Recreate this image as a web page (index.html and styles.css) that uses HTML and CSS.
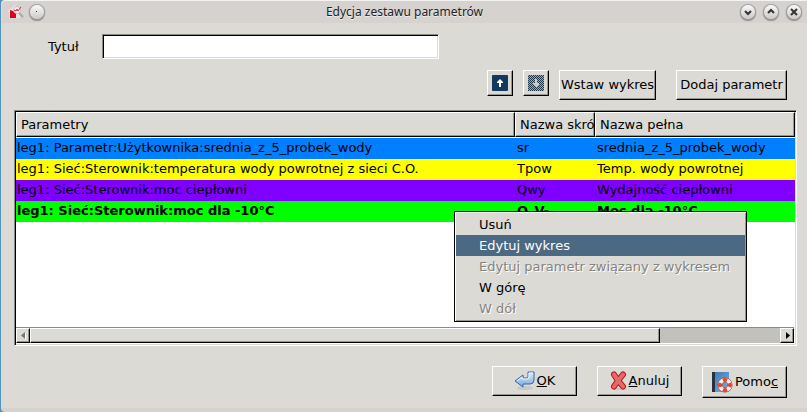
FILE: index.html
```html
<!DOCTYPE html>
<html lang="pl">
<head>
<meta charset="utf-8">
<title>Edycja zestawu parametrów</title>
<link rel="stylesheet" href="styles.css">
</head>
<body>
<div class="window">
  <header class="titlebar">
    <div class="titlebar-side">
      <svg class="app-icon" width="16" height="14" viewBox="0 0 16 14" aria-hidden="true">
        <path d="M0 6L7 0l5 5v8H1V7z" fill="#e9e4e4"/>
        <path d="M2 5l6 2v6H2z" fill="#dc0020"/>
        <circle cx="9" cy="5" r="3.500" fill="#fbeff0" stroke="#d0babc"/>
        <path d="M6 5l2 1 1-2 1 2 3-4" fill="none" stroke="#e0223c"/>
        <path d="M11 8l4 4" stroke="#aaa6a6" stroke-width="2"/>
      </svg>
      <button class="round" type="button" aria-label="Przypnij">
        <svg width="14" height="14" viewBox="0 0 14 14"><rect x="6" y="6" width="1" height="1" stroke="none" fill="#333"/></svg>
      </button>
    </div>
    <h1 class="title">Edycja zestawu parametrów</h1>
    <div class="titlebar-side titlebar-end">
      <button class="round" type="button" aria-label="Minimalizuj">
        <svg width="14" height="14" viewBox="0 0 14 14"><path d="M4 6l3 3 3-3"/></svg>
      </button>
      <button class="round" type="button" aria-label="Maksymalizuj">
        <svg width="14" height="14" viewBox="0 0 14 14"><path d="M4 8l3-3 3 3"/></svg>
      </button>
      <button class="round" type="button" aria-label="Zamknij">
        <svg width="14" height="14" viewBox="0 0 14 14"><path d="M4 4l6 6M10 4l-6 6"/></svg>
      </button>
    </div>
  </header>

  <main class="content">
    <div class="field">
      <label for="name">Tytuł</label>
      <input id="name" type="text">
    </div>

    <div class="toolbar">
      <button class="btn btn-icon" type="button" aria-label="W górę">
        <svg width="16" height="16" viewBox="0 0 16 16"><rect width="16" height="16" rx="1" fill="#133a5e"/><path d="M8 4l3 3v1H9v4H7V8H5V7z" fill="#fff"/></svg>
      </button>
      <button class="btn btn-icon" type="button" aria-label="W dół" disabled>
        <svg width="16" height="16" viewBox="0 0 16 16" shape-rendering="crispEdges">
          <defs><pattern id="stipple" width="2" height="2" patternUnits="userSpaceOnUse"><path d="M0 0h1v1H0zM1 1h1v1H1z" fill="#a4a6a4"/></pattern></defs>
          <rect width="16" height="16" fill="#22394c"/><rect width="16" height="16" fill="url(#stipple)"/>
          <path d="M7 4h2v4h2v1l-3 3-3-3V8h2z" fill="#c9cccd"/>
        </svg>
      </button>
      <button class="btn btn-insert" type="button">Wstaw wykres</button>
      <button class="btn btn-add" type="button">Dodaj parametr</button>
    </div>

    <section class="list">
      <table class="params">
        <colgroup><col><col class="col-short"><col class="col-full"></colgroup>
        <thead>
          <tr><th>Parametry</th><th>Nazwa skró</th><th>Nazwa pełna</th></tr>
        </thead>
        <tbody>
          <tr class="blue"><td>leg1: Parametr:Użytkownika:srednia_z_5_probek_wody</td><td>sr</td><td>srednia_z_5_probek_wody</td></tr>
          <tr class="yellow"><td>leg1: Sieć:Sterownik:temperatura wody powrotnej z sieci C.O.</td><td>Tpow</td><td>Temp. wody powrotnej</td></tr>
          <tr class="violet"><td>leg1: Sieć:Sterownik:moc ciepłowni</td><td>Qwy</td><td>Wydajność ciepłowni</td></tr>
          <tr class="green"><td>leg1: Sieć:Sterownik:moc dla -10°C</td><td>Q_V-</td><td>Moc dla -10°C</td></tr>
        </tbody>
      </table>
      <div class="scrollbar">
        <button class="scroll-arrow" type="button" aria-label="Przewiń w lewo" disabled>
          <svg width="5" height="8" viewBox="0 0 5 8"><path d="M5 1v7L1 4.500z" fill="#fff"/><path d="M4 0v7L0 3.500z" fill="#77756f"/></svg>
        </button>
        <div class="track"><div class="thumb"></div></div>
        <button class="scroll-arrow" type="button" aria-label="Przewiń w prawo">
          <svg width="5" height="8" viewBox="0 0 5 8"><path d="M1 0v7l4-3.500z" fill="#000"/></svg>
        </button>
      </div>
      <div class="menu" role="menu">
        <button type="button" role="menuitem">Usuń</button>
        <button type="button" role="menuitem" class="active">Edytuj wykres</button>
        <button type="button" role="menuitem" disabled>Edytuj parametr związany z wykresem</button>
        <button type="button" role="menuitem">W górę</button>
        <button type="button" role="menuitem" disabled>W dół</button>
      </div>
    </section>

    <footer class="actions">
      <button class="btn btn-action" type="button">
        <svg width="21" height="20" viewBox="0 0 21 20" aria-hidden="true">
          <defs><linearGradient id="arrow" x2="0" y2="1"><stop offset="0" stop-color="#dcebf9"/><stop offset="1" stop-color="#7aa8dc"/></linearGradient></defs>
          <ellipse cx="11" cy="17" rx="8" ry="2" fill="#c9c8c3"/>
          <path d="M1 10l8-6v3h4q1 0 1-1V1h6v8q0 4-4 4H9v3z" fill="url(#arrow)" stroke="#3565a4" stroke-linejoin="round"/>
          <path d="M3 10l5-4v2h5q2 0 2-2V2h4" fill="none" stroke="#f4f9fe"/>
        </svg>
        <span><u>O</u>K</span>
      </button>
      <button class="btn btn-action" type="button">
        <svg width="17" height="20" viewBox="0 0 17 20" aria-hidden="true">
          <ellipse cx="9" cy="18" rx="8" ry="1" fill="#c9c8c3"/>
          <path d="M4 3.500Q7 9 13 15.500M13 3.500Q9 8 4 15.500" fill="none" stroke="#b51c22" stroke-width="6" stroke-linecap="round"/>
          <path d="M4 3.500Q7 9 13 15.500M13 3.500Q9 8 4 15.500" fill="none" stroke="#e8686a" stroke-width="4" stroke-linecap="round"/>
        </svg>
        <span><u>A</u>nuluj</span>
      </button>
      <button class="btn btn-action btn-help" type="button">
        <svg width="22" height="22" viewBox="0 0 22 22" aria-hidden="true">
          <defs><linearGradient id="book" x2="1" y2="1"><stop offset="0" stop-color="#3877b4"/><stop offset="1" stop-color="#79afdd"/></linearGradient></defs>
          <path d="M1 1h17v20H1z" fill="url(#book)"/><path d="M1 1h3v20H1z" fill="#28323e"/>
          <circle cx="14" cy="14" r="5" fill="none" stroke="#a53a2f" stroke-width="5"/>
          <circle cx="14" cy="14" r="5" fill="none" stroke="#f5f3f0" stroke-width="4"/>
          <path d="M12 9.400a5 5 0 0 1 4 0M18.600 12a5 5 0 0 1 0 4M16 18.600a5 5 0 0 1-4 0M9.400 16a5 5 0 0 1 0-4" fill="none" stroke="#df4734" stroke-width="4"/>
        </svg>
        <span>Pomo<u>c</u></span>
      </button>
    </footer>
  </main>
</div>
</body>
</html>
```
FILE: styles.css
```css
* { box-sizing: border-box; }

body {
  margin: 0;
  background: #4f93bf;
  color: #000;
  font: 13px/16px "DejaVu Sans", sans-serif;
}

button, input { font: inherit; color: inherit; }

.window {
  display: flex;
  flex-direction: column;
  min-height: 100vh;
  margin-left: 1px;
  border-left: 1px solid #dcdad8;
  border-bottom: 4px solid #d6d2d0;
  border-radius: 4px 0 0 4px;
  background: #dcdad5;
}

.titlebar {
  display: flex;
  align-items: center;
  height: 23px;
  padding: 0 6px;
  border-top: 1px solid #f4f3f2;
  border-radius: 4px 0 0 0;
  background: #d6d2d0;
}

.titlebar-side { display: flex; flex: 1; align-items: center; gap: 9px; }
.titlebar-side:first-child { gap: 6px; }
.titlebar-end { justify-content: flex-end; }

.title {
  margin: 0;
  color: #222;
  font: 12px/16px "Noto Sans", sans-serif;
  text-shadow: 0 1px #f0eeec;
}

.round {
  width: 14px;
  height: 14px;
  padding: 0;
  border: 0;
  border-radius: 50%;
  background: linear-gradient(#fafafa, #ccc9c7);
  box-shadow: 0 0 1px 1px #a19e9c, 0 1px 1px 1px #8e8b89;
}

.round svg { display: block; fill: none; stroke: #333; stroke-width: 2; }

.content { display: flex; flex: 1; flex-direction: column; padding: 11px 10px 10px 12px; }

.field { display: flex; align-items: center; gap: 23px; padding-left: 34px; }

.field input {
  width: 45%;
  height: 25px;
  padding: 2px 4px;
  border: 1px solid;
  border-color: #8c8a85 #fff #fff #8c8a85;
  background: #fff;
  box-shadow: inset 1px 1px #000, inset -1px -1px #dcdad5;
}

.toolbar {
  display: flex;
  justify-content: flex-end;
  align-items: flex-start;
  gap: 10px;
  padding: 11px 10px 10px 0;
}

.btn {
  display: flex;
  align-items: center;
  justify-content: center;
  height: 30px;
  padding: 0;
  border: 1px solid;
  border-color: #fff #000 #000 #fff;
  border-radius: 0;
  background: #dcdad5;
  box-shadow: inset -1px -1px #98968f;
  white-space: nowrap;
}

.btn-icon { width: 26px; height: 26px; }
.btn-insert { width: 97px; }
.btn-add { width: 111px; margin-left: 10px; }

.list {
  position: relative;
  display: flex;
  flex: 1;
  flex-direction: column;
  border: 1px solid;
  border-color: #8c8a85 #fff #fff #8c8a85;
  background: #fff;
  box-shadow: inset 1px 1px #000, inset -1px -1px #dcdad5;
  padding: 1px;
}

.params { width: 100%; table-layout: fixed; border-collapse: separate; border-spacing: 0; }
.col-short { width: 80px; }
.col-full { width: 200px; }

.params th, .params td { overflow: hidden; white-space: nowrap; text-align: left; }

.params th {
  height: 25px;
  padding: 0 0 0 4px;
  border: 1px solid;
  border-color: #fff #000 #000 #fff;
  background: #dcdad5;
  box-shadow: inset -1px -1px #98968f;
  font-weight: normal;
}

.params tbody::before { content: ""; display: block; height: 1px; }
.params td { height: 21px; padding: 0 0 2px 2px; }
.params td:first-child { padding-left: 1px; }
.blue { background: #007fff; }
.yellow { background: #ff0; }
.violet { background: #7f00ff; }
.green { background: #0f0; font-weight: bold; }

.scrollbar {
  display: flex;
  height: 16px;
  margin: auto 1px 1px 0;
  border-top: 1px solid #8c8a85;
  background: #c3c1bb;
}

.scroll-arrow, .thumb {
  border: 1px solid;
  border-color: #fff #000 #000 #fff;
  background: #dcdad5;
  box-shadow: inset -1px -1px #98968f;
}

.scroll-arrow { display: flex; align-items: center; justify-content: center; width: 14px; padding: 0; }
.track { display: flex; flex: 1; }
.thumb { width: 84%; }

.menu {
  position: absolute;
  top: 100px;
  right: 49px;
  display: flex;
  flex-direction: column;
  width: 293px;
  padding: 2px 1px;
  border: 1px solid #000;
  background: #dcdad5;
  box-shadow: inset 1px 1px #fff, inset -1px -1px #98968f;
}

.menu button {
  height: 21px;
  padding: 0 0 0 23px;
  border: 0;
  background: none;
  text-align: left;
  white-space: nowrap;
}

.menu .active { background: #4b6983; color: #fff; }
.menu button:disabled { color: #85837e; text-shadow: 1px 1px #fff; }

.actions {
  display: flex;
  align-items: flex-start;
  justify-content: flex-end;
  gap: 20px;
  padding: 20px 10px 0 0;
}

.btn-action { width: 85px; gap: 2px; }
.btn-help { height: 32px; }
```
